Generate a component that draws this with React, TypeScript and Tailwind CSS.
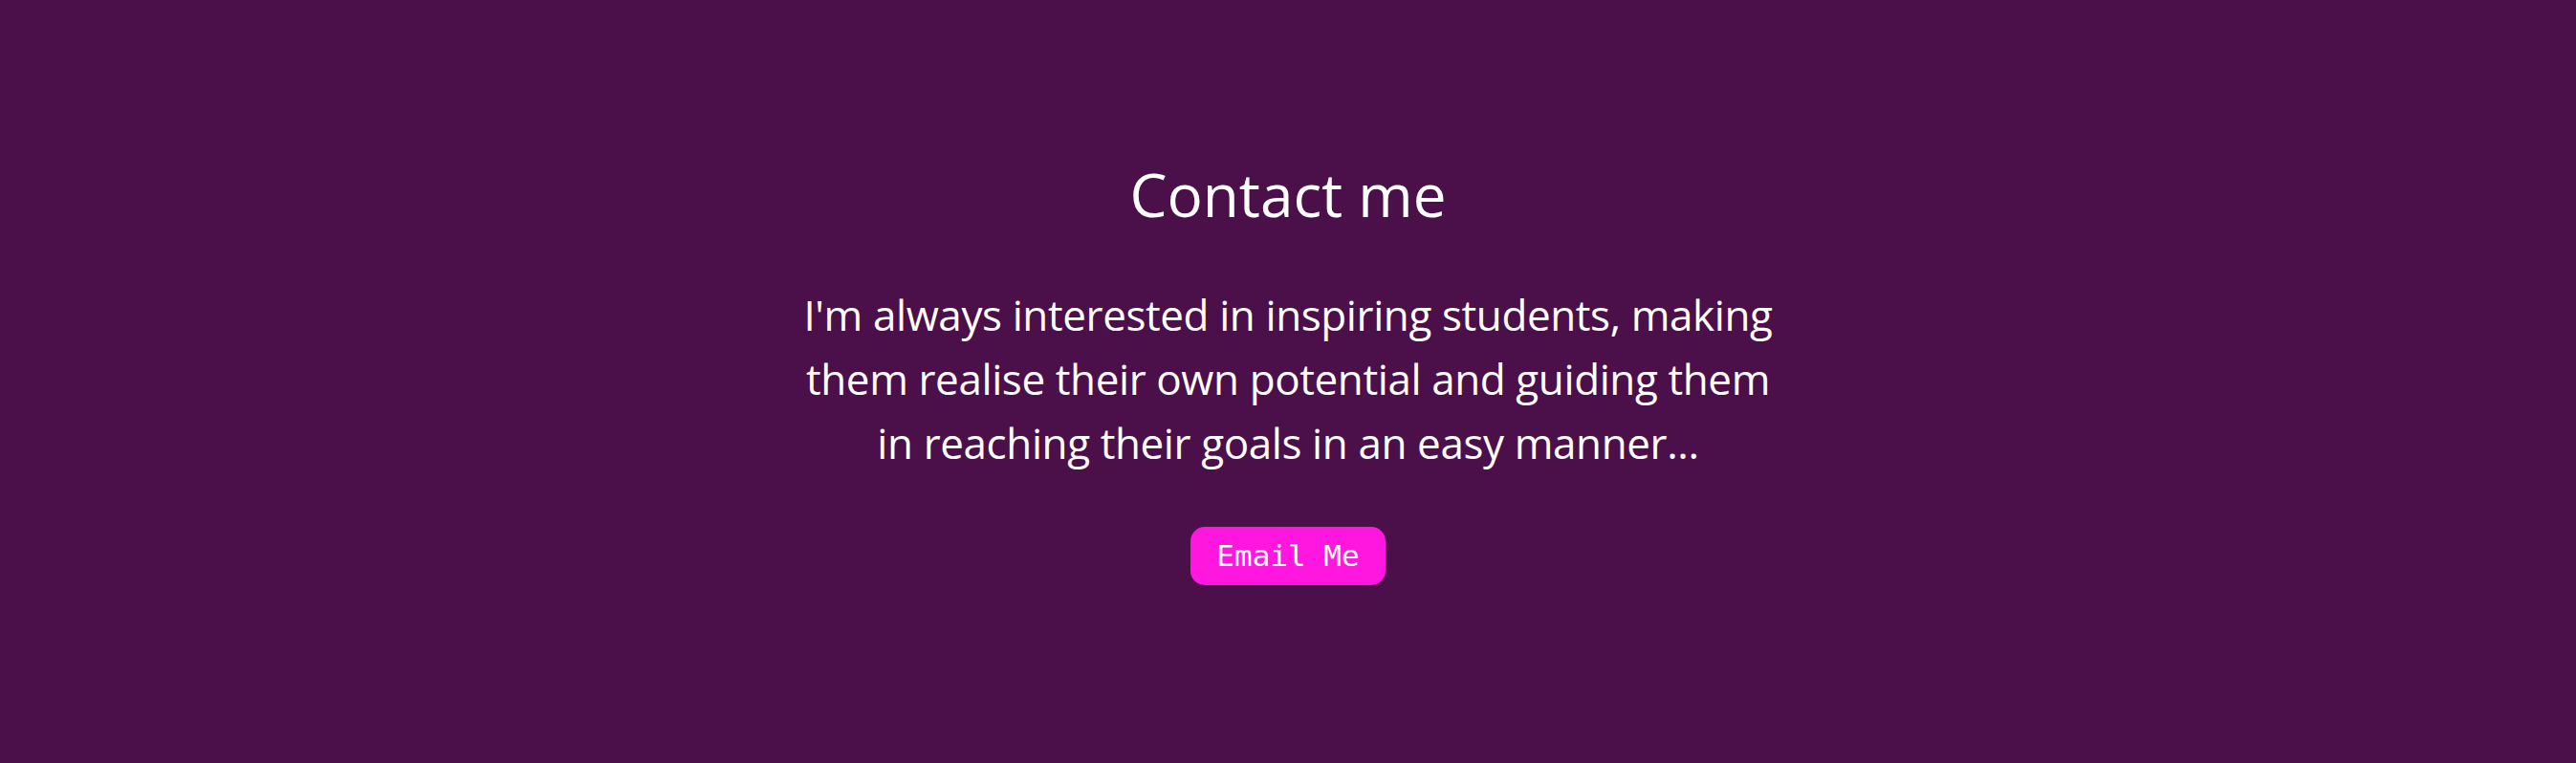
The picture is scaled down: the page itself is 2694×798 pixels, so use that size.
export default function App() {
  return (
    <div className="min-h-[798px] w-full bg-[#4b0f4a] flex flex-col items-center pt-[160px] text-white font-['Open_Sans',sans-serif]">
      <h1 className="text-[62px] leading-[86px] font-normal">Contact me</h1>
      <p className="mt-[50px] text-[44px] leading-[67px] text-center tracking-[-0.4px]">
        I'm always interested in inspiring students, making
        <br />
        them realise their own potential and guiding them
        <br />
        in reaching their goals in an easy manner...
      </p>
      <button className="mt-[54px] w-[204px] h-[61px] rounded-[15px] bg-[#ff17e0] text-white text-[31px] font-['DejaVu_Sans_Mono',monospace]">
        Email Me
      </button>
    </div>
  );
}
